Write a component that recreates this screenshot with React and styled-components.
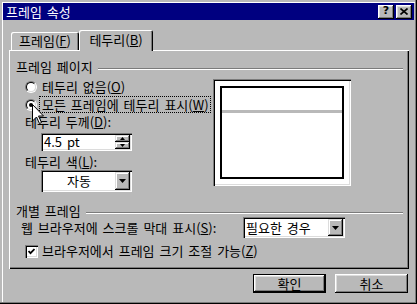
import React from 'react';
import styled, { createGlobalStyle } from 'styled-components';

const FACE = '#b9b9b9';
const SHADOW = '#7b7b7b';
const LIGHT = '#dcdcdc';

const Global = createGlobalStyle`
  html, body { margin: 0; padding: 0; background: ${FACE}; }
  body {
    font-family: "Noto Sans CJK KR", "Noto Sans", sans-serif;
    font-size: 13px;
    word-spacing: 2px;
    color: #000;
  }
  * { box-sizing: border-box; }
`;

const Window = styled.div`
  position: relative;
  width: 417px;
  height: 304px;
  background: ${FACE};
  box-shadow: inset -1px -1px #000, inset -2px -2px ${SHADOW}, inset 2px 2px ${FACE}, inset 3px 3px #fff;
  padding: 3px 3px 0 3px;
  display: flex;
  flex-direction: column;
  overflow: hidden;
`;

const TitleBar = styled.div`
  height: 17px;
  background: #000080;
  display: flex;
  align-items: center;
  padding: 0 2px 0 2px;
`;

const TitleText = styled.span`
  color: #fff;
  line-height: 14px;
  margin-left: 1px;
`;

const TitleButtons = styled.div`
  margin-left: auto;
  display: flex;
  gap: 2px;
`;

const CapButton = styled.div`
  width: 16px;
  height: 14px;
  background: ${FACE};
  box-shadow: inset -1px -1px #000, inset 1px 1px #fff, inset -2px -2px ${SHADOW}, inset 2px 2px ${LIGHT};
  display: flex;
  align-items: center;
  justify-content: center;
  font-family: "DejaVu Sans", sans-serif;
  font-weight: bold;
  font-size: 11px;
  line-height: 12px;
  padding-bottom: 1px;
`;

const TabStrip = styled.div`
  display: flex;
  align-items: flex-end;
  height: 21px;
  margin: 10px 0 -1px 8px;
  position: relative;
  z-index: 1;
`;

const Tab = styled.div`
  height: ${p => (p.$active ? 21 : 18)}px;
  width: ${p => p.$w}px;
  margin-bottom: ${p => (p.$active ? 0 : 1)}px;
  background: ${FACE};
  border-radius: 2px 2px 0 0;
  box-shadow: inset 1px 1px #fff, inset -1px 0 #000, inset -2px 0 ${SHADOW};
  display: flex;
  align-items: center;
  justify-content: center;
  padding-bottom: ${p => (p.$active ? 2 : 0)}px;
  line-height: 14px;
  white-space: nowrap;
`;

const Panel = styled.div`
  margin-left: 6px;
  width: 400px;
  height: 219px;
  background: ${FACE};
  box-shadow: inset 1px 1px #fff, inset -1px -1px #000, inset -2px -2px ${SHADOW};
  padding: 10px 6px 0 7px;
  display: flex;
  flex-direction: column;
`;

const GroupHeader = styled.div`
  display: flex;
  height: ${p => p.$h}px;
  margin-top: ${p => p.$mt || 0}px;
  align-items: center;
  line-height: 14px;
`;

const GroupLine = styled.div`
  flex: 1;
  align-self: flex-start;
  margin: 8px 0 0 5px;
  height: 2px;
  border-top: 1px solid ${SHADOW};
  border-bottom: 1px solid #fff;
`;

const GroupBody = styled.div`
  display: flex;
  padding-left: 9px;
`;

const LeftCol = styled.div`
  width: 188px;
  display: flex;
  flex-direction: column;
`;

const Row = styled.div`
  display: flex;
  align-items: center;
  height: ${p => p.$h}px;
  margin-top: ${p => p.$mt || 0}px;
  padding-left: ${p => p.$pl || 0}px;
  line-height: 14px;
  white-space: nowrap;
`;

const RadioOuter = styled.span`
  width: 12px;
  height: 12px;
  border-radius: 50%;
  border: 1px solid;
  border-color: ${SHADOW} #fff #fff ${SHADOW};
  display: flex;
  align-items: center;
  justify-content: center;
  flex: none;
`;

const RadioInner = styled.span`
  width: 10px;
  height: 10px;
  border-radius: 50%;
  border: 1px solid;
  border-color: #000 ${LIGHT} ${LIGHT} #000;
  background: #fff;
  display: flex;
  align-items: center;
  justify-content: center;
`;

const Dot = styled.span`
  width: 4px;
  height: 4px;
  border-radius: 50%;
  background: #000;
`;

const Label = styled.span`
  margin-left: ${p => p.$ml || 0}px;
  width: ${p => (p.$w ? `${p.$w}px` : 'auto')};
  flex: none;
`;

const Focus = styled.span`
  margin-left: 2px;
  height: 17px;
  padding: 0 1px 0 2px;
  border: 1px dotted #000;
  display: flex;
  align-items: center;
`;

const Field = styled.div`
  width: ${p => p.$w}px;
  height: ${p => p.$h}px;
  margin-left: ${p => p.$ml || 0}px;
  margin-top: ${p => p.$mt || 0}px;
  background: #fff;
  box-shadow: inset 1px 1px ${SHADOW}, inset 2px 2px #000, inset -1px -1px #fff, inset -2px -2px ${LIGHT};
  padding: 2px;
  display: flex;
  align-items: stretch;
  flex: none;
`;

const FieldText = styled.span`
  flex: 1;
  display: flex;
  align-items: center;
  justify-content: ${p => (p.$center ? 'center' : 'flex-start')};
  padding-left: ${p => (p.$center ? 0 : 1)}px;
  line-height: 14px;
  white-space: nowrap;
`;

const SpinCol = styled.div`
  width: 15px;
  display: flex;
  flex-direction: column;
`;

const Bevel = styled.div`
  flex: ${p => (p.$grow ? 1 : 'none')};
  width: ${p => (p.$w ? `${p.$w}px` : 'auto')};
  background: ${FACE};
  box-shadow: inset -1px -1px #000, inset 1px 1px ${LIGHT}, inset -2px -2px ${SHADOW}, inset 2px 2px #fff;
  display: flex;
  align-items: center;
  justify-content: center;
`;

const Preview = styled.div`
  margin-top: 5px;
  width: 138px;
  height: 107px;
  background: #fff;
  box-shadow: inset 1px 1px ${SHADOW}, inset 2px 2px #000, inset -1px -1px #fff, inset -2px -2px ${LIGHT};
  padding: 7px;
  flex: none;
`;

const PreviewFrame = styled.div`
  height: 100%;
  border: 2px solid #000;
  padding-top: 22px;
  background: #fff;
`;

const PreviewBand = styled.div`
  height: 3px;
  background: ${FACE};
`;

const CheckBox = styled.span`
  width: 13px;
  height: 13px;
  background: #fff;
  box-shadow: inset 1px 1px ${SHADOW}, inset 2px 2px #000, inset -1px -1px #fff, inset -2px -2px ${LIGHT};
  display: flex;
  align-items: center;
  justify-content: center;
  flex: none;
`;

const ButtonRow = styled.div`
  display: flex;
  justify-content: flex-end;
  gap: 9px;
  margin-top: 5px;
  padding-right: 6px;
`;

const Button = styled.div`
  width: 73px;
  height: 19px;
  background: ${FACE};
  border: ${p => (p.$default ? '1px solid #000' : 'none')};
  box-shadow: inset -1px -1px #000, inset 1px 1px #fff, inset -2px -2px ${SHADOW}, inset 2px 2px ${LIGHT};
  display: flex;
  align-items: center;
  justify-content: center;
  line-height: 14px;
`;

const Cursor = styled.svg`
  position: absolute;
  left: 32px;
  top: 104px;
`;

const U = styled.u`
  text-decoration: underline;
  text-underline-offset: 1px;
`;

const Arrow = () => (
  <svg width="7" height="4" viewBox="0 0 7 4">
    <path d="M0 0H7L3.5 4Z" fill="#000" />
  </svg>
);

const Tiny = ({ up }) => (
  <svg width="5" height="3" viewBox="0 0 5 3">
    <path d={up ? 'M2.5 0L5 3H0Z' : 'M0 0H5L2.5 3Z'} fill="#000" />
  </svg>
);

const Radio = ({ on }) => (
  <RadioOuter>
    <RadioInner>{on && <Dot />}</RadioInner>
  </RadioOuter>
);

export default function App() {
  return (
    <>
      <Global />
      <Window>
        <TitleBar>
          <TitleText>프레임 속성</TitleText>
          <TitleButtons>
            <CapButton>?</CapButton>
            <CapButton>
              <svg width="8" height="7" viewBox="0 0 8 7">
                <path d="M0.5 0.5L7.5 6.5M7.5 0.5L0.5 6.5" stroke="#000" strokeWidth="1.6" />
              </svg>
            </CapButton>
          </TitleButtons>
        </TitleBar>

        <TabStrip>
          <Tab $w={68}>프레임(<U>F</U>)</Tab>
          <Tab $w={74} $active>테두리(<U>B</U>)</Tab>
        </TabStrip>

        <Panel>
          <GroupHeader $h={14}>
            <span>프레임 페이지</span>
            <GroupLine />
          </GroupHeader>
          <GroupBody>
            <LeftCol>
              <Row $h={17} $mt={4}>
                <Radio />
                <Label $ml={5}>테두리 없음(<U>O</U>)</Label>
              </Row>
              <Row $h={17} $mt={1}>
                <Radio on />
                <Focus>모든 프레임에 테두리 표시(<U>W</U>)</Focus>
              </Row>
              <Row $h={16} $mt={1}>
                <Label>테두리 두께(<U>D</U>):</Label>
              </Row>
              <Field $w={91} $h={18} $ml={16} $mt={3}>
                <FieldText>4.5 pt</FieldText>
                <SpinCol>
                  <Bevel $grow><Tiny up /></Bevel>
                  <Bevel $grow><Tiny /></Bevel>
                </SpinCol>
              </Field>
              <Row $h={14} $mt={4}>
                <Label>테두리 색(<U>L</U>):</Label>
              </Row>
              <Field $w={91} $h={22} $ml={16} $mt={1}>
                <FieldText $center>자동</FieldText>
                <Bevel $w={15}><Arrow /></Bevel>
              </Field>
            </LeftCol>
            <Preview>
              <PreviewFrame>
                <PreviewBand />
              </PreviewFrame>
            </Preview>
          </GroupBody>

          <GroupHeader $h={13} $mt={12}>
            <span>개별 프레임</span>
            <GroupLine />
          </GroupHeader>
          <Row $h={21} $pl={5}>
            <Label $w={222}>웹 브라우저에 스크롤 막대 표시(<U>S</U>):</Label>
            <Field $w={102} $h={21}>
              <FieldText>필요한 경우</FieldText>
              <Bevel $w={15}><Arrow /></Bevel>
            </Field>
          </Row>
          <Row $h={16} $mt={5} $pl={9}>
            <CheckBox>
              <svg width="7" height="7" viewBox="0 0 7 7">
                <path d="M0.5 3L2.5 5.2L6.5 1" stroke="#000" strokeWidth="1.8" fill="none" />
              </svg>
            </CheckBox>
            <Label $ml={4}>브라우저에서 프레임 크기 조절 가능(<U>Z</U>)</Label>
          </Row>
        </Panel>

        <ButtonRow>
          <Button $default>확인</Button>
          <Button>취소</Button>
        </ButtonRow>

        <Cursor width="13" height="21" viewBox="0 0 13 21">
          <path d="M0.5 0.5V17L4.5 13L7.5 19.5L9.5 18.5L6.5 12H11.5Z" fill="#fff" stroke="#000" strokeWidth="1" />
        </Cursor>
      </Window>
    </>
  );
}
